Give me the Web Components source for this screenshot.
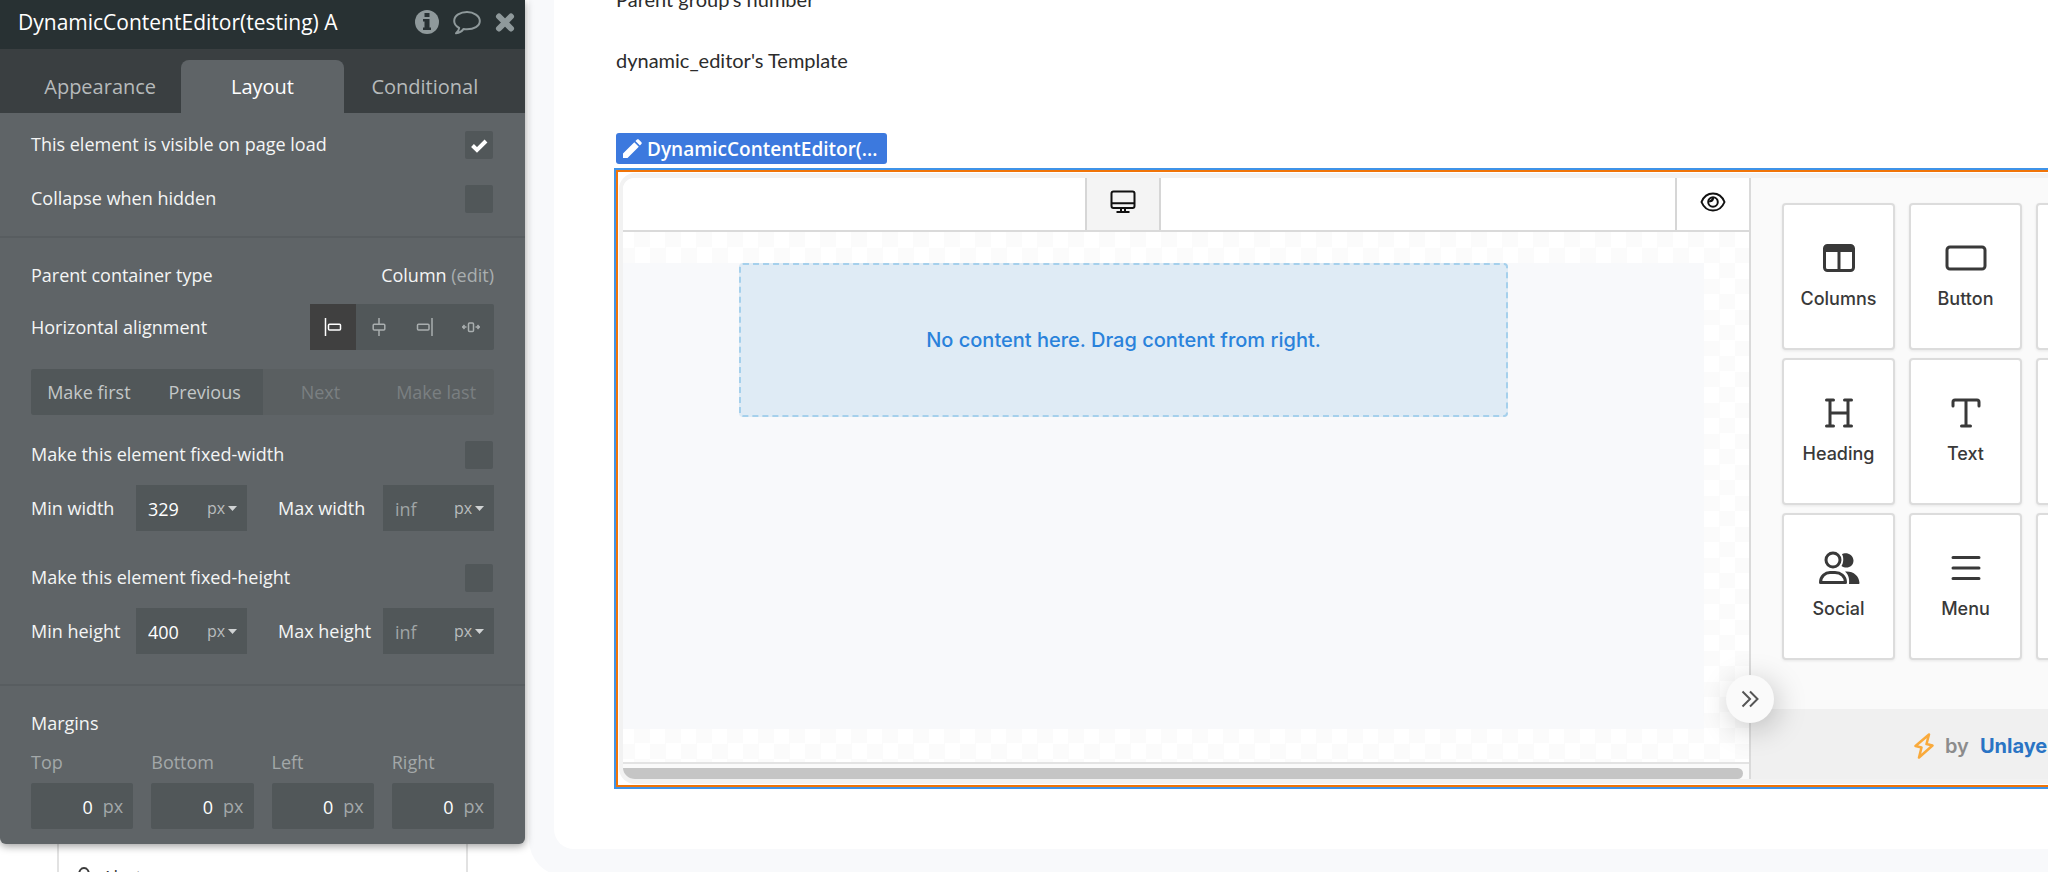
<!DOCTYPE html>
<html lang="en">
<head>
<meta charset="utf-8">
<title>Dynamic Content Editor</title>
<style>
    html, body { margin: 0; height: 100%; overflow: hidden; background: #fff; }
</style>
</head>
<body>
<builder-app></builder-app>

<script>
// Base component: opens the shadow root and renders css + markup
class BaseComponent extends HTMLElement {
    constructor() {
        super();
        this.shadowDOM = this.attachShadow({ mode: 'open' });
    }

    connectedCallback() {
        this.shadowDOM.innerHTML = `
            <style>*, *::before, *::after { box-sizing: border-box; }</style>
            ${this.templateCss()}
            ${this.template()}
        `;
    }

    attr(name) {
        return this.getAttribute(name) || '';
    }
}

// Shared icon set
const ICONS = {
    info: `<svg width="24" height="24" viewBox="0 0 24 24"><circle cx="12" cy="12" r="12" fill="#8f999b"/><path d="M9.500 3h5v4h-5zM8 9h6.500v8.500H16V20H8v-2.500h1.500v-6H8z" fill="#283133"/></svg>`,
    comment: `<svg width="28" height="26" viewBox="0 0 28 26" fill="none" stroke="#8f999b" stroke-width="2" stroke-linejoin="round"><path d="M14 3C7.400 3 1.200 6.500 1.200 12c0 3 2 5.400 5 7-.2 2-1.700 4-3.200 5.300 3.500-.4 6-2 7.600-4.400 1.100.2 2.200.3 3.400.3 6.800 0 12.800-3 12.800-8.200S20.600 3 14 3z"/></svg>`,
    close: `<svg width="20" height="20" viewBox="0 0 20 20"><path d="M4 4.500l12 12M16 4.500l-12 12" stroke="#8f999b" stroke-width="6" stroke-linecap="round"/></svg>`,
    alignStart: `<svg width="18" height="20" viewBox="0 0 18 20" fill="none" stroke="currentColor" stroke-width="1.500"><path d="M1.500 1v18"/><rect x="4.500" y="7.200" width="12" height="5.800" rx="1"/></svg>`,
    alignCenter: `<svg width="18" height="20" viewBox="0 0 18 20" fill="none" stroke="currentColor" stroke-width="1.500"><path d="M9 1v6M9 13v6"/><rect x="3.200" y="7.200" width="11.600" height="5.800" rx="1"/></svg>`,
    alignEnd: `<svg width="18" height="20" viewBox="0 0 18 20" fill="none" stroke="currentColor" stroke-width="1.500"><path d="M16 1v18"/><rect x="1.500" y="7.200" width="11.500" height="5.800" rx="1"/></svg>`,
    stretch: `<svg width="18" height="20" viewBox="0 0 18 20" fill="none" stroke="currentColor" stroke-width="1.500"><rect x="6.500" y="6" width="5" height="8.500" rx="1"/><path d="M0 10h4.500M2.500 8L.8 10l1.700 2M18 10h-4.500M15.500 8l1.700 2-1.700 2"/></svg>`,
    pencil: `<svg width="20" height="20" viewBox="0 0 20 20" fill="#fff"><path d="M1 19v-4.500L12.300 3.200l4.500 4.500L5.500 19zM13.400 2.100L15 .6c.5-.5 1.200-.5 1.700 0l2.700 2.700c.5.5.5 1.200 0 1.700l-1.500 1.600z"/></svg>`,
    desktop: `<svg width="26" height="24" viewBox="0 0 26 24" fill="none" stroke="#111" stroke-width="2"><rect x="1.500" y="1.500" width="23" height="16.500" rx="2"/><path d="M2 13.200h22M11 18v3.500M15 18v3.500M6.500 22h13"/></svg>`,
    eye: `<svg width="26" height="20" viewBox="0 0 26 20" fill="none" stroke="#111" stroke-width="2"><path d="M1.500 10C3.600 4.800 8 1.500 13 1.500S22.400 4.800 24.500 10C22.400 15.200 18 18.500 13 18.500S3.600 15.200 1.500 10z"/><circle cx="13" cy="10" r="4.800"/><path d="M9.300 8.800c1.800.8 3.700-.4 3.500-3" stroke-width="2.500"/></svg>`,
    columns: `<svg width="34" height="30" viewBox="0 0 34 30" fill="none" stroke="#393939" stroke-width="3"><rect x="2.500" y="2.500" width="29" height="25" rx="3"/><path d="M2 6h30" stroke-width="6"/><path d="M17 6v21"/></svg>`,
    button: `<svg width="42" height="26" viewBox="0 0 42 26" fill="none" stroke="#393939" stroke-width="3"><rect x="2" y="2" width="38" height="22" rx="3"/></svg>`,
    heading: `<svg width="30" height="30" viewBox="0 0 30 30" fill="none" stroke="#393939" stroke-width="3" stroke-linecap="round"><path d="M2.500 2h7M20.500 2h7M2.500 28h7M20.500 28h7M6 2v26M24 2v26M6 15h18"/></svg>`,
    text: `<svg width="30" height="30" viewBox="0 0 30 30" fill="none" stroke="#393939" stroke-width="3" stroke-linecap="round" stroke-linejoin="round"><path d="M2 8V4q0-2 2-2h22q2 0 2 2v4M15 2v26M10.500 28h9"/></svg>`,
    social: `<svg width="42" height="34" viewBox="0 0 42 34"><g fill="none" stroke="#393939" stroke-width="3"><circle cx="15" cy="9" r="7"/><path d="M2.500 31.500C2.500 25 7.500 21.500 12 21.500h5c5.500 0 10.500 3.500 10.500 10z" stroke-linejoin="round"/></g><path d="M24 3.200C27 1 35 2 35.500 9.500 35.500 16 28.500 18.500 23.500 15c2-3 2.500-8.500.5-11.800zM27 20.500c8-.8 14 4 14.500 11.500 0 .7-.5 1-1 1H31c.7-5-.5-9.500-4-12.500z" fill="#393939"/></svg>`,
    menu: `<svg width="30" height="26" viewBox="0 0 30 26" fill="none" stroke="#393939" stroke-width="3" stroke-linecap="round"><path d="M2 2.500h26M2 13h26M2 23.500h26"/></svg>`,
    bolt: `<svg width="20" height="26" viewBox="0 0 20 26" fill="none" stroke="#f9aa3c" stroke-width="2.500" stroke-linejoin="round"><path d="M15 1.500L1.500 13 7.500 14.500 5 24.500 18.500 12.500 12.500 11z"/></svg>`,
    chevrons: `<svg width="18" height="18" viewBox="0 0 18 18" fill="none" stroke="#555" stroke-width="2"><path d="M1.500 1.500L9 9l-7.500 7.500M9 1.500L16.500 9 9 16.500"/></svg>`,
    bell: `<svg width="18" height="24" viewBox="0 0 18 24" fill="none" stroke="#3a3a3a" stroke-width="2"><path d="M2 20c2-2 2-5 2-9 0-4 2-7 5-7s5 3 5 7c0 4 0 7 2 9z"/></svg>`
};

// Tick box row with its label
class CheckRow extends BaseComponent {
    template() {
        return `
        <label for="box">${this.attr('label')}</label>
        <input id="box" type="checkbox" ${this.hasAttribute('checked') ? 'checked' : ''}>
        `;
    }

    templateCss() {
        return `
        <style>
            :host {
                display: flex;
                align-items: flex-start;
                justify-content: space-between;
                height: 28px;
            }

            input {
                appearance: none;
                width: 28px;
                height: 28px;
                margin: 0 1px 0 0;
                border-radius: 2px;
                background: #515759;
            }

            input:checked {
                background: #515759 url('data:image/svg+xml,<svg xmlns="http://www.w3.org/2000/svg" viewBox="0 0 28 28"><path d="M7.500 14.500l4.500 4.500 9-9" fill="none" stroke="white" stroke-width="4"/></svg>');
            }
        </style>
        `;
    }
}
customElements.define('check-row', CheckRow);

// Min / max size box with a unit drop-down
class SizeField extends BaseComponent {
    template() {
        return `
        <label for="size">${this.attr('label')}</label>
        <div class="box">
            <input id="size" type="text" value="${this.attr('value')}" placeholder="inf">
            <select aria-label="${this.attr('label')} unit"><option>px</option><option>%</option></select>
            <svg width="9" height="5" viewBox="0 0 9 5"><path d="M0 0h9L4.500 5z" fill="#d0d3d4"/></svg>
        </div>
        `;
    }

    templateCss() {
        return `
        <style>
            :host {
                display: flex;
                align-items: center;
                justify-content: space-between;
                white-space: nowrap;
            }

            .box {
                display: flex;
                align-items: center;
                width: 111px;
                height: 46px;
                padding: 0 10px 0 12px;
                background: #515759;
            }

            input {
                flex: 1;
                min-width: 0;
                height: 46px;
                padding: 2px 0 0;
                border: 0;
                background: none;
                color: #fff;
                font: inherit;
                outline: none;
            }

            input::placeholder { color: #9fa4a5; }

            select {
                appearance: none;
                width: 21px;
                padding: 0;
                border: 0;
                background: none;
                color: #b9bdbe;
                font: inherit;
                font-size: 16px;
            }
        </style>
        `;
    }
}
customElements.define('size-field', SizeField);

// Margin box: label above, right aligned number and px suffix
class MarginField extends BaseComponent {
    template() {
        return `
        <label for="margin">${this.attr('label')}</label>
        <div class="box"><input id="margin" type="text" value="0"><span>px</span></div>
        `;
    }

    templateCss() {
        return `
        <style>
            :host {
                display: flex;
                flex-direction: column;
                gap: 8px;
                flex: 1;
                min-width: 0;
                color: #a3a8a9;
                line-height: 26px;
            }

            .box {
                display: flex;
                align-items: center;
                gap: 10px;
                height: 46px;
                padding: 0 10px;
                background: #515759;
                border-radius: 2px;
            }

            input {
                flex: 1;
                min-width: 0;
                padding: 2px 0 0;
                border: 0;
                background: none;
                color: #fff;
                font: inherit;
                text-align: right;
            }
        </style>
        `;
    }
}
customElements.define('margin-field', MarginField);

// Property panel of the selected element
class PropertyPanel extends BaseComponent {
    template() {
        return `
        <header>
            <h1>DynamicContentEditor(testing) A</h1>
            <button aria-label="Info">${ICONS.info}</button>
            <button aria-label="Comment">${ICONS.comment}</button>
            <button aria-label="Close">${ICONS.close}</button>
        </header>
        <nav>
            <button>Appearance</button>
            <button class="active">Layout</button>
            <button>Conditional</button>
        </nav>
        <section class="visibility">
            <check-row label="This element is visible on page load" checked></check-row>
            <check-row label="Collapse when hidden"></check-row>
        </section>
        <section class="sizing">
            <div class="row parent">
                <span>Parent container type</span>
                <span>Column <a href="#">(edit)</a></span>
            </div>
            <div class="row">
                <span>Horizontal alignment</span>
                <div class="segments">
                    <button class="active" aria-label="Left">${ICONS.alignStart}</button>
                    <button aria-label="Center">${ICONS.alignCenter}</button>
                    <button aria-label="Right">${ICONS.alignEnd}</button>
                    <button aria-label="Stretch">${ICONS.stretch}</button>
                </div>
            </div>
            <div class="order">
                <button>Make first</button>
                <button>Previous</button>
                <button disabled>Next</button>
                <button disabled>Make last</button>
            </div>
            <check-row label="Make this element fixed-width"></check-row>
            <div class="sizes">
                <size-field label="Min width" value="329"></size-field>
                <size-field label="Max width"></size-field>
            </div>
            <check-row label="Make this element fixed-height"></check-row>
            <div class="sizes">
                <size-field label="Min height" value="400"></size-field>
                <size-field label="Max height"></size-field>
            </div>
        </section>
        <section class="margins">
            <h2>Margins</h2>
            <div class="fields">
                <margin-field label="Top"></margin-field>
                <margin-field label="Bottom"></margin-field>
                <margin-field label="Left"></margin-field>
                <margin-field label="Right"></margin-field>
            </div>
        </section>
        `;
    }

    templateCss() {
        return `
        <style>
            :host {
                display: block;
                background: #5f6467;
                color: #f4f5f5;
                font: 18px/26px "Open Sans", sans-serif;
                border-radius: 0 0 6px 6px;
                box-shadow: 0 2px 8px rgba(0, 0, 0, 0.4);
                overflow: hidden;
            }

            h1, h2 { margin: 0; font: inherit; }

            button {
                padding: 0;
                border: 0;
                background: none;
                color: inherit;
                font: inherit;
            }

            svg { display: block; }

            header {
                display: flex;
                align-items: center;
                gap: 14px;
                height: 49px;
                padding: 0 10px 5px 18px;
                background: #283133;
            }

            h1 {
                width: 322px;
                margin-right: auto;
                overflow: hidden;
                white-space: nowrap;
                font-size: 21px;
                color: #fff;
            }

            nav {
                display: grid;
                grid-template-columns: repeat(3, 1fr);
                padding: 11px 19px 0;
                height: 64px;
                background: #3a3f41;
                font-size: 20px;
                color: #b6babb;
            }

            nav .active {
                border-radius: 8px 8px 0 0;
                background: #5f6467;
                color: #fff;
            }

            section { padding: 0 31px; }

            .visibility {
                display: grid;
                gap: 26px;
                padding-top: 18px;
                padding-bottom: 23px;
                border-bottom: 2px solid #585d60;
            }

            .sizing {
                padding-top: 24px;
                padding-bottom: 30px;
                border-bottom: 2px solid #585d60;
            }

            .row {
                display: flex;
                align-items: center;
                justify-content: space-between;
            }

            .parent { margin-bottom: 16px; }

            a { color: #a9aeaf; text-decoration: none; }

            .segments {
                display: grid;
                grid-template-columns: repeat(4, 46px);
                height: 46px;
                background: #515759;
                border-radius: 2px;
                color: #a9aeaf;
            }

            .segments button { display: grid; place-items: center; }
            .segments .active { background: #404040; color: #fff; }

            .order {
                display: grid;
                grid-template-columns: repeat(4, 1fr);
                height: 46px;
                margin: 19px 0 26px;
                border-radius: 3px;
                background: #5a5f61;
                overflow: hidden;
            }

            .order button { background: #515759; color: #c3c7c8; }
            .order button:disabled { background: none; color: #7a7f81; }

            .sizes {
                display: grid;
                grid-template-columns: 216px 216px;
                justify-content: space-between;
                margin-top: 16px;
            }

            .sizes + check-row { margin-top: 33px; }

            .margins { padding-top: 24px; padding-bottom: 15px; }
            .margins h2 { margin-bottom: 13px; }
            .fields { display: flex; gap: 18px; }
        </style>
        `;
    }
}
customElements.define('property-panel', PropertyPanel);

// One draggable tool of the content editor
class ToolTile extends BaseComponent {
    template() {
        return `<button><span class="icon">${ICONS[this.attr('icon')] || ''}</span><slot></slot></button>`;
    }

    templateCss() {
        return `
        <style>
            :host { display: block; }

            button {
                display: flex;
                flex-direction: column;
                align-items: center;
                width: 100%;
                height: 147px;
                padding: 34px 0 0;
                border: 2px solid #dcdcdc;
                border-radius: 4px;
                background: #fff;
                box-shadow: 0 1px 3px rgba(0, 0, 0, 0.08);
                color: #393939;
                font: 500 18px/24px Inter, sans-serif;
            }

            .icon {
                display: grid;
                place-items: center;
                height: 38px;
                margin-bottom: 10px;
            }
        </style>
        `;
    }
}
customElements.define('tool-tile', ToolTile);

// Embedded content editor: device bar, drop zone and tool list
class ContentEditor extends BaseComponent {
    template() {
        return `
        <div class="frame">
            <div class="stage">
                <div class="toolbar">
                    <button class="desktop" aria-label="Desktop">${ICONS.desktop}</button>
                    <button class="preview" aria-label="Preview">${ICONS.eye}</button>
                </div>
                <div class="canvas">
                    <div class="body"><div class="drop">No content here. Drag content from right.</div></div>
                </div>
                <div class="scrollbar"><div class="thumb"></div></div>
            </div>
            <aside>
                <div class="tools">
                    <tool-tile icon="columns">Columns</tool-tile>
                    <tool-tile icon="button">Button</tool-tile>
                    <tool-tile></tool-tile>
                    <tool-tile icon="heading">Heading</tool-tile>
                    <tool-tile icon="text">Text</tool-tile>
                    <tool-tile></tool-tile>
                    <tool-tile icon="social">Social</tool-tile>
                    <tool-tile icon="menu">Menu</tool-tile>
                    <tool-tile></tool-tile>
                </div>
                <footer>${ICONS.bolt}<span>by</span><a href="#">Unlayer</a></footer>
                <button class="collapse" aria-label="Collapse tools">${ICONS.chevrons}</button>
            </aside>
        </div>
        `;
    }

    templateCss() {
        return `
        <style>
            :host {
                display: block;
                padding: 1px 0 1px 1px;
                border: solid #f07408;
                border-width: 2px 0 2px 2px;
                box-shadow: 0 0 0 2px #3f93e8;
                background: #fff;
                font-family: Inter, sans-serif;
            }

            button { padding: 0; border: 0; background: none; }
            svg { display: block; }

            .frame {
                display: grid;
                grid-template-columns: minmax(0, 1fr) 299px;
                border: solid #f2f2f2;
                border-width: 5px 0 5px 4px;
                border-radius: 16px 0 0 16px;
                overflow: hidden;
            }

            .stage {
                display: flex;
                flex-direction: column;
                min-width: 0;
            }

            /* the device button is centred on the drop zone, not on the bar */
            .toolbar {
                display: grid;
                grid-template-columns: 1fr 76px 1fr 126px;
                height: 54px;
                border-bottom: 2px solid #dadada;
                background: #fff;
            }

            .toolbar button {
                display: grid;
                justify-items: center;
                align-content: start;
                padding-top: 12px;
            }

            .desktop {
                grid-column: 2;
                border: solid #d6d6d6;
                border-width: 0 2px;
                background: #f4f4f4;
            }

            .toolbar .preview {
                grid-column: 4;
                justify-self: end;
                width: 74px;
                padding-top: 14px;
                border-left: 2px solid #d6d6d6;
            }

            .canvas {
                flex: 1;
                padding: 31px 45px 33px 0;
                background: conic-gradient(#fbfbfb 25%, #fff 0 50%, #fbfbfb 0 75%, #fff 0) 27px 0 / 31px 31px;
            }

            .body {
                height: 100%;
                padding: 0 196px 0 116px;
                background: #f8f9fb;
            }

            .drop {
                display: grid;
                place-items: center;
                height: 154px;
                border: 2px dashed #a5d0ec;
                border-radius: 4px;
                background: #dfebf5;
                color: #2a82db;
                font-size: 20px;
                font-weight: 500;
            }

            .scrollbar {
                height: 17px;
                padding-top: 4px;
                border-top: 2px solid #e3e3e3;
                background: #fafafa;
            }

            .thumb {
                height: 11px;
                margin-right: 6px;
                background: #c5c5c5;
                border-radius: 0 6px 6px 0;
            }

            aside {
                position: relative;
                display: flex;
                flex-direction: column;
                border-left: 2px solid #dadada;
                background: #fafafa;
            }

            .tools {
                display: grid;
                grid-template-columns: repeat(3, 113px);
                gap: 8px 14px;
                padding: 25px 0 49px 31px;
            }

            footer {
                display: flex;
                align-items: center;
                gap: 11px;
                height: 70px;
                padding: 4px 0 0 163px;
                background: #f0f0f0;
                color: #8c8c8c;
                font-size: 20px;
                font-weight: 600;
            }

            footer svg { flex: none; }

            a { color: #2a74c4; font-weight: 700; text-decoration: none; }

            .collapse {
                position: absolute;
                left: -25px;
                bottom: 56px;
                display: grid;
                place-items: center;
                width: 48px;
                height: 48px;
                border-radius: 50%;
                background: #fafafa;
                box-shadow: 4px 6px 30px rgba(0, 0, 0, 0.22);
            }
        </style>
        `;
    }
}
customElements.define('content-editor', ContentEditor);

// Whole page: left column with the panel, page canvas on the right
class BuilderApp extends BaseComponent {
    template() {
        return `
        <div class="left">
            <property-panel></property-panel>
            <div class="palette"><div class="item">${ICONS.bell}<span>Alert</span></div></div>
        </div>
        <main>
            <div class="page">
                <p>Parent group's number</p>
                <p>dynamic_editor's Template</p>
                <div class="tag">${ICONS.pencil}<span>DynamicContentEditor(...</span></div>
                <content-editor></content-editor>
            </div>
        </main>
        `;
    }

    templateCss() {
        return `
        <style>
            :host {
                display: grid;
                grid-template-columns: 525px minmax(0, 1fr);
                height: 100vh;
                overflow: hidden;
            }

            .left {
                display: flex;
                flex-direction: column;
            }

            property-panel { position: relative; }

            .palette {
                flex: 1;
                min-height: 0;
                margin: 0 57px;
                border: solid #e2e2e2;
                border-width: 0 2px;
                overflow: hidden;
            }

            .item {
                display: flex;
                gap: 9px;
                padding: 20px 0 0 16px;
                font: 18px/26px "Open Sans", sans-serif;
                color: #3a3a3a;
            }

            main {
                align-self: start;
                height: 876px;
                margin-left: 4px;
                padding-left: 25px;
                border-radius: 0 0 0 36px;
                background: #f8f9fb;
            }

            .page {
                height: 849px;
                padding-left: 62px;
                border-radius: 0 0 0 20px;
                background: #fff;
                overflow: hidden;
            }

            p {
                width: 233px;
                margin: 0 0 35px;
                overflow: hidden;
                white-space: nowrap;
                color: #2c2c2c;
                font: 20px/26px Lato, sans-serif;
            }

            p:first-child { margin-top: -14px; }

            .tag {
                display: flex;
                align-items: center;
                gap: 5px;
                width: 271px;
                height: 31px;
                margin: 60px 0 6px;
                padding: 0 12px 0 6px;
                border-radius: 3px;
                background: #3c79de;
                color: #fff;
                font: 600 19px/26px "Open Sans", sans-serif;
                white-space: nowrap;
            }

            .tag svg { flex: none; }
        </style>
        `;
    }
}
customElements.define('builder-app', BuilderApp);
</script>
</body>
</html>
